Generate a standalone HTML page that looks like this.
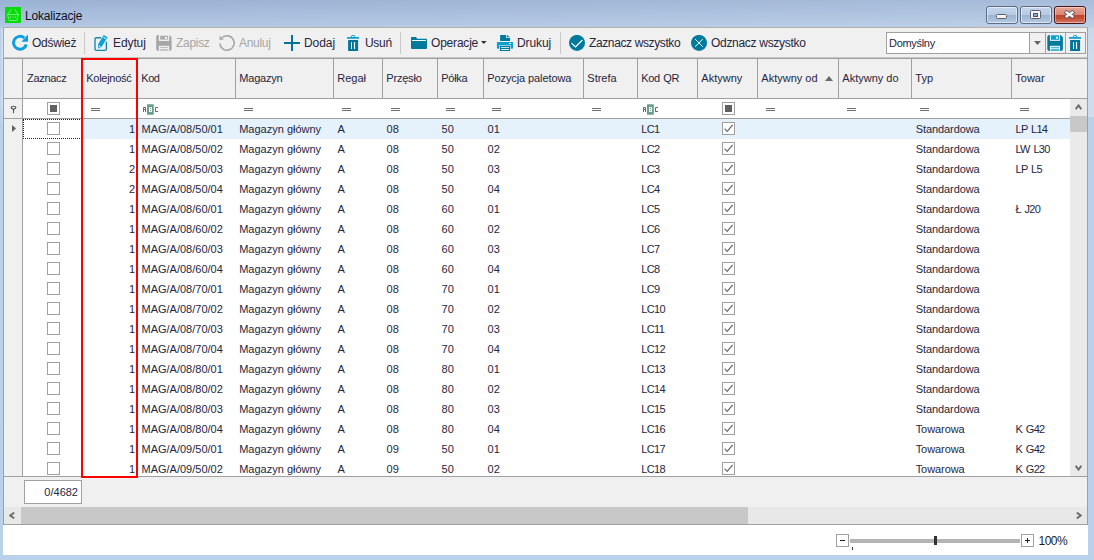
<!DOCTYPE html>
<html><head><meta charset="utf-8"><title>Lokalizacje</title>
<style>
*{box-sizing:border-box;margin:0;padding:0}
html,body{width:1094px;height:560px;overflow:hidden}
body{font-family:"Liberation Sans",sans-serif;font-size:11px;color:#262640;position:relative;background:#b9d1ea}
.abs,.abs *{position:absolute}
#frame{left:0;top:0;width:1094px;height:560px;background:linear-gradient(180deg,#9ab2d4 0,#a6bddc 14px,#b4c9e4 28px,#b9d0e9 60px,#b9d1ea 100%)}
#frame .shine{left:0;top:0;width:1094px;height:28px;background:linear-gradient(90deg,rgba(255,255,255,0) 0,rgba(255,255,255,.04) 40%,rgba(255,255,255,.14) 100%)}
#frame .lb{left:0;top:28px;width:3px;height:100px;background:linear-gradient(90deg,rgba(255,255,255,0),rgba(255,255,255,.45));-webkit-mask-image:linear-gradient(180deg,#000 75%,transparent)}
#frame .rb{left:1088px;top:28px;width:6px;height:89px;background:rgba(255,255,255,.28)}
#title{left:25px;top:9px;font-size:12px;letter-spacing:-.2px;color:#101020;white-space:nowrap;line-height:14px}
#client{left:3px;top:27px;width:1085px;height:498px;background:#f0f0f0;border-right:1px solid #a0a0a0;border-left:1px solid #a6a6a6;border-top:1px solid #b4b1ab}
.tb{font-size:12px;letter-spacing:-.3px;color:#262640;white-space:nowrap;line-height:14px;top:36px}
.tb.dis{color:#a6a6a6}
.sep{top:32px;width:1px;height:22px;background:#c9c9c9}
.vl{width:1px;background:#a0a0a0}
.hl{height:1px;background:#a0a0a0}
.hd{top:72px;line-height:13px;white-space:nowrap}
.c{line-height:13px;white-space:nowrap}
.cb{width:13px;height:13px;border:1px solid #a0a0a0;background:#fff}
.eq{width:9px;height:3px;border-top:1px solid #6e6e6e;border-bottom:1px solid #6e6e6e}
</style></head><body>
<div id="frame" class="abs"><div class="shine"></div><div class="lb"></div><div class="rb"></div></div>
<div class="abs" style="left:5px;top:7px;width:16px;height:16px;background:#05dc0a">
<svg style="left:0;top:0" width="16" height="16" viewBox="0 0 16 16"><g fill="none" stroke="#7df082" stroke-width=".9"><path d="M3.25 7 L6.25 2.25 M12.75 7 L9.75 2.25"/><path d="M2 7.5 H14"/><path d="M2.75 8 L4.25 13.5 H11.75 L13.25 8"/><path d="M5.5 9.25V11.25M7.9 9.25V11.25M10.3 9.25V11.25" stroke-width=".8"/></g></svg></div>
<div id="title" class="abs">Lokalizacje</div>
<div class="abs" style="left:986px;top:6px;width:32px;height:18px;border:1px solid #5b6b84;border-radius:3px;background:linear-gradient(180deg,#c4d6eb 0,#b6cbe4 47%,#9bb4d2 53%,#b4c9e3 100%);box-shadow:inset 0 0 0 1px rgba(255,255,255,.55)"><div style="left:9px;top:7.4px;width:11px;height:5px;background:#f4f4f4;border:1px solid #5a5f6e;border-radius:1.5px"></div></div>
<div class="abs" style="left:1020px;top:6px;width:32px;height:18px;border:1px solid #5b6b84;border-radius:3px;background:linear-gradient(180deg,#c4d6eb 0,#b6cbe4 47%,#9bb4d2 53%,#b4c9e3 100%);box-shadow:inset 0 0 0 1px rgba(255,255,255,.55)"><div style="left:9px;top:3px;width:11px;height:9.4px;background:#f4f4f4;border:1px solid #5a5f6e;border-radius:1.5px"><div style="left:2px;top:2px;width:5px;height:4px;background:#8fa6c2;border:1px solid #4f5566"></div></div></div>
<div class="abs" style="left:1054px;top:6px;width:32px;height:18px;border:1px solid #4a1418;border-radius:3px;background:linear-gradient(180deg,#e8a898 0,#dc8573 47%,#c0442a 53%,#c8523a 75%,#d67e68 100%);box-shadow:inset 0 0 0 1px rgba(255,255,255,.4)"><svg style="left:8px;top:1.6px" width="14" height="12" viewBox="0 0 14 12"><path d="M2.1 2.3 L10.9 8.4 M10.9 2.3 L2.1 8.4" stroke="#55505c" stroke-width="4" stroke-linecap="butt"/><path d="M2.7 2.7 L10.3 8 M10.3 2.7 L2.7 8" stroke="#f8f8f8" stroke-width="2.4" stroke-linecap="butt"/></svg></div>
<div id="client" class="abs"></div>
<div class="abs" id="toolbar">
<svg style="left:11px;top:34px" width="18" height="18" viewBox="0 0 18 18"><path d="M13.3 3.9 A6.5 6.5 0 1 0 15.3 10.5" fill="none" stroke="#0c9fe0" stroke-width="3"/><path d="M17 0.6 V7.7 H10.4 Z" fill="#0c9fe0"/></svg>
<div class="tb" style="left:32px;letter-spacing:-0.25px">Odśwież</div>
<div class="sep" style="left:84px"></div>
<svg style="left:93px;top:33px" width="16" height="19" viewBox="0 0 16 19"><path d="M8.2 4.75 H3.4 Q2 4.75 2 6.2 V16 Q2 17.4 3.4 17.4 H12 Q13.4 17.4 13.4 16 V8.8" fill="none" stroke="#1585a6" stroke-width="1.35"/><g transform="translate(5 15.7) rotate(31)"><path d="M0 0 L-2.2 -3.8 V-14.8 H2.2 V-3.8 Z" fill="#0aa0cf" stroke="#f0f0f0" stroke-width="1.2" paint-order="stroke"/><path d="M0 -1.4 L-1 -3.4 H1 Z" fill="#fff"/><rect x="-1.4" y="-13.2" width="2.8" height="1" fill="#e6f5fb"/></g></svg>
<div class="tb" style="left:113px;letter-spacing:-0.1px">Edytuj</div>
<svg style="left:156px;top:35px" width="16" height="16" viewBox="0 0 16 16"><path d="M1.8 0 H13.2 L15.6 2.2 V14 Q15.6 15.8 13.8 15.8 H1.8 Q0.2 15.8 0.2 14 V1.6 Q0.2 0 1.8 0Z" fill="#a6a6a6"/><rect x="2.8" y="0" width="10.4" height="6" fill="#f0f0f0"/><rect x="4.2" y="0.7" width="7.7" height="3.9" fill="#ababab"/><rect x="9" y="2" width="2" height="1.9" fill="#f4f4f4"/><rect x="2.8" y="10.8" width="10.4" height="5" fill="#f0f0f0"/><rect x="4.2" y="12.2" width="7.7" height=".8" fill="#adadad"/><rect x="4.2" y="14.3" width="7.7" height="1.2" fill="#adadad"/></svg>
<div class="tb dis" style="left:176px;letter-spacing:-0.3px">Zapisz</div>
<svg style="left:218px;top:34px" width="18" height="18" viewBox="0 0 18 18"><path d="M1.8 9.4 A7.2 7.2 0 1 0 4.3 3.5" fill="none" stroke="#a6a6a6" stroke-width="1.6"/><path d="M1.7 1.8 L1.5 6.1 L5.9 5.6 Z" fill="#a6a6a6"/></svg>
<div class="tb dis" style="left:239px;letter-spacing:-0.3px">Anuluj</div>
<svg style="left:284px;top:35px" width="16" height="16" viewBox="0 0 16 16"><path d="M8 0 V16 M0 8 H16" stroke="#007599" stroke-width="2"/></svg>
<div class="tb" style="left:304px;letter-spacing:-0.05px">Dodaj</div>
<svg style="left:346px;top:34px" width="14" height="18" viewBox="0 0 14 18"><rect x="5.6" y="1.5" width="3" height="2.2" rx=".6" fill="none" stroke="#0aa0cf" stroke-width="1"/><rect x="1" y="3" width="12" height="1.8" rx=".3" fill="#0aa0cf"/><rect x="2.1" y="6" width="10" height="10.9" rx=".5" fill="#007599"/><rect x="5" y="8" width="1" height="7" fill="#fff"/><rect x="7.9" y="8" width="1.2" height="7" fill="#fff"/></svg>
<div class="tb" style="left:365px;letter-spacing:-0.3px">Usuń</div>
<div class="sep" style="left:400px"></div>
<svg style="left:411px;top:37px" width="16" height="12" viewBox="0 0 16 12"><path d="M0 1 Q0 0 1 0 H5 L6.3 1.8 H15 Q16 1.8 16 2.8 V11 Q16 12 15 12 H1 Q0 12 0 11Z" fill="#007a9c"/><rect x="1" y="3" width="14" height="1" fill="#f2fafc"/></svg>
<div class="tb" style="left:431px;letter-spacing:-0.2px">Operacje</div>
<svg style="left:481px;top:41px" width="6" height="3" viewBox="0 0 6 3"><path d="M0 0 H5.6 L2.8 3Z" fill="#333"/></svg>
<svg style="left:496px;top:34px" width="18" height="18" viewBox="0 0 18 18"><path d="M4.1 1 H10.2 V4.1 H14.1 V6.9 H4.1Z" fill="#007a9c"/><path d="M11 1 L14.1 3.3 H11Z" fill="#007a9c"/><rect x="0.9" y="8.06" width="16.2" height="6.8" rx=".8" fill="#0aa0cf"/><rect x="13" y="9.1" width="2" height=".9" fill="#fff"/><rect x="3.2" y="11.4" width="11.6" height="6.6" fill="#f0f0f0"/><rect x="3.9" y="12" width="10.2" height="4.9" rx=".5" fill="#007a9c"/><rect x="5" y="13.2" width="8" height=".8" fill="#fff"/><rect x="5" y="15" width="8" height=".9" fill="#fff"/></svg>
<div class="tb" style="left:517px;letter-spacing:-0.1px">Drukuj</div>
<div class="sep" style="left:560px"></div>
<svg style="left:569px;top:35px" width="16" height="16" viewBox="0 0 16 16"><circle cx="8" cy="7.9" r="8" fill="#007a9c"/><path d="M2.5 8.2 L6.5 11.9 L13.4 5" fill="none" stroke="#fff" stroke-width="1.15"/></svg>
<div class="tb" style="left:589px;letter-spacing:-0.38px">Zaznacz wszystko</div>
<svg style="left:691px;top:35px" width="16" height="16" viewBox="0 0 16 16"><circle cx="8" cy="7.9" r="8" fill="#007a9c"/><path d="M4.1 4.05 L11.8 11.7 M11.8 4.05 L4.1 11.7" fill="none" stroke="#fff" stroke-width="1"/></svg>
<div class="tb" style="left:711px;letter-spacing:-0.3px">Odznacz wszystko</div>
<div style="left:886px;top:32px;width:160px;height:22px;border:1px solid #a0a0a0;background:#fff"></div>
<div style="left:1029px;top:33px;width:1px;height:20px;background:#a0a0a0"></div>
<div style="left:1030px;top:33px;width:15px;height:20px;background:#f0f0f0"></div>
<div class="c" style="left:889px;top:36.5px;letter-spacing:-.3px">Domyślny</div>
<svg style="left:1034px;top:41px" width="7" height="4" viewBox="0 0 7 4"><path d="M0 0 H7 L3.5 3.9Z" fill="#666"/></svg>
<div style="left:1045px;top:32px;width:21px;height:22px;border:1px solid #a0a0a0;background:#f0f0f0"></div>
<svg style="left:1047px;top:35px" width="16" height="16" viewBox="0 0 16 16"><path d="M2.2 0 H13.6 L15.9 2.3 V13.9 Q15.9 15.9 13.9 15.9 H2.2 Q.3 15.9 .3 13.9 V2 Q.3 0 2.2 0Z" fill="#007a9c"/><rect x="2.9" y="0" width="10.2" height="5.86" fill="#eef3f5"/><rect x="3.9" y="0.3" width="8.2" height="4.5" fill="#0aa0cf"/><rect x="9.1" y="1.8" width="1.9" height="1.9" fill="#f4fbfd"/><rect x="2.9" y="10.8" width="10.2" height="5.1" fill="#eef3f5"/><rect x="3.9" y="11.6" width="8.2" height="4.3" fill="#cdeaf6"/><rect x="3.9" y="12.07" width="8.2" height=".85" fill="#2fb0e0"/><rect x="3.9" y="14" width="8.2" height="1.9" fill="#3fb6e2"/></svg>
<div style="left:1065px;top:32px;width:21px;height:22px;border:1px solid #a0a0a0;background:#f0f0f0"></div>
<svg style="left:1068px;top:34px" width="14" height="18" viewBox="0 0 14 18"><rect x="5.6" y="1.5" width="3" height="2.2" rx=".6" fill="none" stroke="#0aa0cf" stroke-width="1"/><rect x="1" y="3" width="12" height="1.8" rx=".3" fill="#0aa0cf"/><rect x="2.1" y="6" width="10" height="10.9" rx=".5" fill="#007599"/><rect x="5" y="8" width="1" height="7" fill="#fff"/><rect x="7.9" y="8" width="1.2" height="7" fill="#fff"/></svg>
</div>
<div class="abs" id="grid">
<div style="left:4px;top:58px;width:1083px;height:419px;background:#fff"></div>
<div style="left:4px;top:58px;width:1083px;height:41px;background:#f0f0f0"></div>
<div style="left:4px;top:99px;width:18px;height:378px;background:#f0f0f0"></div>
<div style="left:82px;top:119px;width:988px;height:20px;background:#e5f1fb"></div>
<div class="hl" style="left:3px;top:57px;width:1084px;background:#c6c6c6"></div>
<div class="hl" style="left:3px;top:58px;width:1084px"></div>
<div class="hl" style="left:4px;top:98px;width:1083px"></div>
<div class="hl" style="left:4px;top:118px;width:1066px"></div>
<div class="hl" style="left:4px;top:476px;width:1083px"></div>
<div class="vl" style="left:3px;top:58px;height:467px"></div>
<div class="vl" style="left:22px;top:58px;height:419px"></div>
<div class="vl" style="left:82px;top:59px;height:39px"></div>
<div class="vl" style="left:137px;top:59px;height:39px"></div>
<div class="vl" style="left:235px;top:59px;height:39px"></div>
<div class="vl" style="left:333px;top:59px;height:39px"></div>
<div class="vl" style="left:382px;top:59px;height:39px"></div>
<div class="vl" style="left:437px;top:59px;height:39px"></div>
<div class="vl" style="left:483px;top:59px;height:39px"></div>
<div class="vl" style="left:583px;top:59px;height:39px"></div>
<div class="vl" style="left:637px;top:59px;height:39px"></div>
<div class="vl" style="left:697px;top:59px;height:39px"></div>
<div class="vl" style="left:757px;top:59px;height:39px"></div>
<div class="vl" style="left:838px;top:59px;height:39px"></div>
<div class="vl" style="left:911px;top:59px;height:39px"></div>
<div class="vl" style="left:1011px;top:59px;height:39px"></div>
<div class="hd" style="left:27px;letter-spacing:-0.32px">Zaznacz</div>
<div class="hd" style="left:86.3px;letter-spacing:-0.28px">Kolejność</div>
<div class="hd" style="left:141.3px;letter-spacing:-0.5px">Kod</div>
<div class="hd" style="left:239.3px;letter-spacing:-0.2px">Magazyn</div>
<div class="hd" style="left:337.3px;letter-spacing:0px">Regał</div>
<div class="hd" style="left:386.3px;letter-spacing:-0.2px">Przęsło</div>
<div class="hd" style="left:441.3px;letter-spacing:-0.3px">Półka</div>
<div class="hd" style="left:487.3px;letter-spacing:-0.1px">Pozycja paletowa</div>
<div class="hd" style="left:587.3px;letter-spacing:0px">Strefa</div>
<div class="hd" style="left:641.3px;letter-spacing:-0.4px;word-spacing:1px">Kod QR</div>
<div class="hd" style="left:701.3px;letter-spacing:0px">Aktywny</div>
<div class="hd" style="left:761.3px;letter-spacing:0px">Aktywny od</div>
<div class="hd" style="left:842.3px;letter-spacing:0px">Aktywny do</div>
<div class="hd" style="left:915.3px;letter-spacing:0px">Typ</div>
<div class="hd" style="left:1015.3px;letter-spacing:0px">Towar</div>
<svg style="left:825px;top:76px" width="8" height="5" viewBox="0 0 8 5"><path d="M0 5 H8 L4 0Z" fill="#6a6a6a"/></svg>
<svg style="left:10px;top:104.5px" width="7" height="9" viewBox="0 0 7 9"><path d="M1.3 2.6 L3.5 5.6 L5.7 2.6Z" fill="#555"/><ellipse cx="3.5" cy="2.6" rx="2.3" ry="1.4" fill="#f4f4f4" stroke="#555" stroke-width="1.1"/><path d="M3.5 5 V8.2" stroke="#555" stroke-width="1.1"/></svg>
<div class="cb" style="left:47px;top:102px"><div style="left:2px;top:2px;width:7px;height:7px;background:#606060"></div></div>
<div class="cb" style="left:722px;top:102px"><div style="left:2px;top:2px;width:7px;height:7px;background:#606060"></div></div>
<div class="eq" style="left:91px;top:108px"></div>
<div class="eq" style="left:244px;top:108px"></div>
<div class="eq" style="left:342px;top:108px"></div>
<div class="eq" style="left:391px;top:108px"></div>
<div class="eq" style="left:446px;top:108px"></div>
<div class="eq" style="left:492px;top:108px"></div>
<div class="eq" style="left:592px;top:108px"></div>
<div class="eq" style="left:766px;top:108px"></div>
<div class="eq" style="left:847px;top:108px"></div>
<div class="eq" style="left:920px;top:108px"></div>
<div class="eq" style="left:1020px;top:108px"></div>
<svg style="left:142px;top:104px" width="17" height="11" viewBox="0 0 17 11"><rect x="5" y="0.2" width="6.8" height="10.6" rx=".6" fill="#6a9e8c"/><path d="M1.5 8 V3.5 H3.5 V8 M1.5 5.5 H3.5 M16 3.5 H13.5 V7.5 H16" fill="none" stroke="#6a6a6a" stroke-width="1"/><rect x="7" y="3" width="3" height="5" fill="#fff"/><rect x="8" y="4" width="1" height="1" fill="#6a9e8c"/><rect x="8" y="6" width="1" height="1" fill="#6a9e8c"/></svg>
<svg style="left:642px;top:104px" width="17" height="11" viewBox="0 0 17 11"><rect x="5" y="0.2" width="6.8" height="10.6" rx=".6" fill="#6a9e8c"/><path d="M1.5 8 V3.5 H3.5 V8 M1.5 5.5 H3.5 M16 3.5 H13.5 V7.5 H16" fill="none" stroke="#6a6a6a" stroke-width="1"/><rect x="7" y="3" width="3" height="5" fill="#fff"/><rect x="8" y="4" width="1" height="1" fill="#6a9e8c"/><rect x="8" y="6" width="1" height="1" fill="#6a9e8c"/></svg>
<div class="cb" style="left:47px;top:122px"></div><div class="c" style="left:82px;width:53px;text-align:right;top:123px">1</div><div class="c" style="left:141.5px;top:123px">MAG/A/08/50/01</div><div class="c" style="left:239.2px;top:123px">Magazyn główny</div><div class="c" style="left:337.6px;top:123px">A</div><div class="c" style="left:386.6px;top:123px">08</div><div class="c" style="left:441.6px;top:123px">50</div><div class="c" style="left:487.6px;top:123px">01</div><div class="c" style="left:641.3px;top:123px;letter-spacing:-.65px">LC1</div><div class="cb" style="left:722px;top:122px"><svg style="left:1px;top:1px" width="9" height="9" viewBox="0 0 9 9"><path d="M0.6 4.6 L3.2 7.4 L8.6 1" fill="none" stroke="#6a6a6a" stroke-width="1.2"/></svg></div><div class="c" style="left:915.7px;top:123px;letter-spacing:-.08px">Standardowa</div><div class="c" style="left:1015.5px;top:123px;letter-spacing:-.7px;word-spacing:1.3px">LP L14</div>
<div class="cb" style="left:47px;top:142px"></div><div class="c" style="left:82px;width:53px;text-align:right;top:143px">1</div><div class="c" style="left:141.5px;top:143px">MAG/A/08/50/02</div><div class="c" style="left:239.2px;top:143px">Magazyn główny</div><div class="c" style="left:337.6px;top:143px">A</div><div class="c" style="left:386.6px;top:143px">08</div><div class="c" style="left:441.6px;top:143px">50</div><div class="c" style="left:487.6px;top:143px">02</div><div class="c" style="left:641.3px;top:143px;letter-spacing:-.65px">LC2</div><div class="cb" style="left:722px;top:142px"><svg style="left:1px;top:1px" width="9" height="9" viewBox="0 0 9 9"><path d="M0.6 4.6 L3.2 7.4 L8.6 1" fill="none" stroke="#6a6a6a" stroke-width="1.2"/></svg></div><div class="c" style="left:915.7px;top:143px;letter-spacing:-.08px">Standardowa</div><div class="c" style="left:1015.5px;top:143px;letter-spacing:-.7px;word-spacing:1.3px">LW L30</div>
<div class="cb" style="left:47px;top:162px"></div><div class="c" style="left:82px;width:53px;text-align:right;top:163px">2</div><div class="c" style="left:141.5px;top:163px">MAG/A/08/50/03</div><div class="c" style="left:239.2px;top:163px">Magazyn główny</div><div class="c" style="left:337.6px;top:163px">A</div><div class="c" style="left:386.6px;top:163px">08</div><div class="c" style="left:441.6px;top:163px">50</div><div class="c" style="left:487.6px;top:163px">03</div><div class="c" style="left:641.3px;top:163px;letter-spacing:-.65px">LC3</div><div class="cb" style="left:722px;top:162px"><svg style="left:1px;top:1px" width="9" height="9" viewBox="0 0 9 9"><path d="M0.6 4.6 L3.2 7.4 L8.6 1" fill="none" stroke="#6a6a6a" stroke-width="1.2"/></svg></div><div class="c" style="left:915.7px;top:163px;letter-spacing:-.08px">Standardowa</div><div class="c" style="left:1015.5px;top:163px;letter-spacing:-.7px;word-spacing:1.3px">LP L5</div>
<div class="cb" style="left:47px;top:182px"></div><div class="c" style="left:82px;width:53px;text-align:right;top:183px">2</div><div class="c" style="left:141.5px;top:183px">MAG/A/08/50/04</div><div class="c" style="left:239.2px;top:183px">Magazyn główny</div><div class="c" style="left:337.6px;top:183px">A</div><div class="c" style="left:386.6px;top:183px">08</div><div class="c" style="left:441.6px;top:183px">50</div><div class="c" style="left:487.6px;top:183px">04</div><div class="c" style="left:641.3px;top:183px;letter-spacing:-.65px">LC4</div><div class="cb" style="left:722px;top:182px"><svg style="left:1px;top:1px" width="9" height="9" viewBox="0 0 9 9"><path d="M0.6 4.6 L3.2 7.4 L8.6 1" fill="none" stroke="#6a6a6a" stroke-width="1.2"/></svg></div><div class="c" style="left:915.7px;top:183px;letter-spacing:-.08px">Standardowa</div>
<div class="cb" style="left:47px;top:202px"></div><div class="c" style="left:82px;width:53px;text-align:right;top:203px">1</div><div class="c" style="left:141.5px;top:203px">MAG/A/08/60/01</div><div class="c" style="left:239.2px;top:203px">Magazyn główny</div><div class="c" style="left:337.6px;top:203px">A</div><div class="c" style="left:386.6px;top:203px">08</div><div class="c" style="left:441.6px;top:203px">60</div><div class="c" style="left:487.6px;top:203px">01</div><div class="c" style="left:641.3px;top:203px;letter-spacing:-.65px">LC5</div><div class="cb" style="left:722px;top:202px"><svg style="left:1px;top:1px" width="9" height="9" viewBox="0 0 9 9"><path d="M0.6 4.6 L3.2 7.4 L8.6 1" fill="none" stroke="#6a6a6a" stroke-width="1.2"/></svg></div><div class="c" style="left:915.7px;top:203px;letter-spacing:-.08px">Standardowa</div><div class="c" style="left:1015.5px;top:203px;letter-spacing:-.7px;word-spacing:1.3px">Ł J20</div>
<div class="cb" style="left:47px;top:222px"></div><div class="c" style="left:82px;width:53px;text-align:right;top:223px">1</div><div class="c" style="left:141.5px;top:223px">MAG/A/08/60/02</div><div class="c" style="left:239.2px;top:223px">Magazyn główny</div><div class="c" style="left:337.6px;top:223px">A</div><div class="c" style="left:386.6px;top:223px">08</div><div class="c" style="left:441.6px;top:223px">60</div><div class="c" style="left:487.6px;top:223px">02</div><div class="c" style="left:641.3px;top:223px;letter-spacing:-.65px">LC6</div><div class="cb" style="left:722px;top:222px"><svg style="left:1px;top:1px" width="9" height="9" viewBox="0 0 9 9"><path d="M0.6 4.6 L3.2 7.4 L8.6 1" fill="none" stroke="#6a6a6a" stroke-width="1.2"/></svg></div><div class="c" style="left:915.7px;top:223px;letter-spacing:-.08px">Standardowa</div>
<div class="cb" style="left:47px;top:242px"></div><div class="c" style="left:82px;width:53px;text-align:right;top:243px">1</div><div class="c" style="left:141.5px;top:243px">MAG/A/08/60/03</div><div class="c" style="left:239.2px;top:243px">Magazyn główny</div><div class="c" style="left:337.6px;top:243px">A</div><div class="c" style="left:386.6px;top:243px">08</div><div class="c" style="left:441.6px;top:243px">60</div><div class="c" style="left:487.6px;top:243px">03</div><div class="c" style="left:641.3px;top:243px;letter-spacing:-.65px">LC7</div><div class="cb" style="left:722px;top:242px"><svg style="left:1px;top:1px" width="9" height="9" viewBox="0 0 9 9"><path d="M0.6 4.6 L3.2 7.4 L8.6 1" fill="none" stroke="#6a6a6a" stroke-width="1.2"/></svg></div><div class="c" style="left:915.7px;top:243px;letter-spacing:-.08px">Standardowa</div>
<div class="cb" style="left:47px;top:262px"></div><div class="c" style="left:82px;width:53px;text-align:right;top:263px">1</div><div class="c" style="left:141.5px;top:263px">MAG/A/08/60/04</div><div class="c" style="left:239.2px;top:263px">Magazyn główny</div><div class="c" style="left:337.6px;top:263px">A</div><div class="c" style="left:386.6px;top:263px">08</div><div class="c" style="left:441.6px;top:263px">60</div><div class="c" style="left:487.6px;top:263px">04</div><div class="c" style="left:641.3px;top:263px;letter-spacing:-.65px">LC8</div><div class="cb" style="left:722px;top:262px"><svg style="left:1px;top:1px" width="9" height="9" viewBox="0 0 9 9"><path d="M0.6 4.6 L3.2 7.4 L8.6 1" fill="none" stroke="#6a6a6a" stroke-width="1.2"/></svg></div><div class="c" style="left:915.7px;top:263px;letter-spacing:-.08px">Standardowa</div>
<div class="cb" style="left:47px;top:282px"></div><div class="c" style="left:82px;width:53px;text-align:right;top:283px">1</div><div class="c" style="left:141.5px;top:283px">MAG/A/08/70/01</div><div class="c" style="left:239.2px;top:283px">Magazyn główny</div><div class="c" style="left:337.6px;top:283px">A</div><div class="c" style="left:386.6px;top:283px">08</div><div class="c" style="left:441.6px;top:283px">70</div><div class="c" style="left:487.6px;top:283px">01</div><div class="c" style="left:641.3px;top:283px;letter-spacing:-.65px">LC9</div><div class="cb" style="left:722px;top:282px"><svg style="left:1px;top:1px" width="9" height="9" viewBox="0 0 9 9"><path d="M0.6 4.6 L3.2 7.4 L8.6 1" fill="none" stroke="#6a6a6a" stroke-width="1.2"/></svg></div><div class="c" style="left:915.7px;top:283px;letter-spacing:-.08px">Standardowa</div>
<div class="cb" style="left:47px;top:302px"></div><div class="c" style="left:82px;width:53px;text-align:right;top:303px">1</div><div class="c" style="left:141.5px;top:303px">MAG/A/08/70/02</div><div class="c" style="left:239.2px;top:303px">Magazyn główny</div><div class="c" style="left:337.6px;top:303px">A</div><div class="c" style="left:386.6px;top:303px">08</div><div class="c" style="left:441.6px;top:303px">70</div><div class="c" style="left:487.6px;top:303px">02</div><div class="c" style="left:641.3px;top:303px;letter-spacing:-.65px">LC10</div><div class="cb" style="left:722px;top:302px"><svg style="left:1px;top:1px" width="9" height="9" viewBox="0 0 9 9"><path d="M0.6 4.6 L3.2 7.4 L8.6 1" fill="none" stroke="#6a6a6a" stroke-width="1.2"/></svg></div><div class="c" style="left:915.7px;top:303px;letter-spacing:-.08px">Standardowa</div>
<div class="cb" style="left:47px;top:322px"></div><div class="c" style="left:82px;width:53px;text-align:right;top:323px">1</div><div class="c" style="left:141.5px;top:323px">MAG/A/08/70/03</div><div class="c" style="left:239.2px;top:323px">Magazyn główny</div><div class="c" style="left:337.6px;top:323px">A</div><div class="c" style="left:386.6px;top:323px">08</div><div class="c" style="left:441.6px;top:323px">70</div><div class="c" style="left:487.6px;top:323px">03</div><div class="c" style="left:641.3px;top:323px;letter-spacing:-.65px">LC11</div><div class="cb" style="left:722px;top:322px"><svg style="left:1px;top:1px" width="9" height="9" viewBox="0 0 9 9"><path d="M0.6 4.6 L3.2 7.4 L8.6 1" fill="none" stroke="#6a6a6a" stroke-width="1.2"/></svg></div><div class="c" style="left:915.7px;top:323px;letter-spacing:-.08px">Standardowa</div>
<div class="cb" style="left:47px;top:342px"></div><div class="c" style="left:82px;width:53px;text-align:right;top:343px">1</div><div class="c" style="left:141.5px;top:343px">MAG/A/08/70/04</div><div class="c" style="left:239.2px;top:343px">Magazyn główny</div><div class="c" style="left:337.6px;top:343px">A</div><div class="c" style="left:386.6px;top:343px">08</div><div class="c" style="left:441.6px;top:343px">70</div><div class="c" style="left:487.6px;top:343px">04</div><div class="c" style="left:641.3px;top:343px;letter-spacing:-.65px">LC12</div><div class="cb" style="left:722px;top:342px"><svg style="left:1px;top:1px" width="9" height="9" viewBox="0 0 9 9"><path d="M0.6 4.6 L3.2 7.4 L8.6 1" fill="none" stroke="#6a6a6a" stroke-width="1.2"/></svg></div><div class="c" style="left:915.7px;top:343px;letter-spacing:-.08px">Standardowa</div>
<div class="cb" style="left:47px;top:362px"></div><div class="c" style="left:82px;width:53px;text-align:right;top:363px">1</div><div class="c" style="left:141.5px;top:363px">MAG/A/08/80/01</div><div class="c" style="left:239.2px;top:363px">Magazyn główny</div><div class="c" style="left:337.6px;top:363px">A</div><div class="c" style="left:386.6px;top:363px">08</div><div class="c" style="left:441.6px;top:363px">80</div><div class="c" style="left:487.6px;top:363px">01</div><div class="c" style="left:641.3px;top:363px;letter-spacing:-.65px">LC13</div><div class="cb" style="left:722px;top:362px"><svg style="left:1px;top:1px" width="9" height="9" viewBox="0 0 9 9"><path d="M0.6 4.6 L3.2 7.4 L8.6 1" fill="none" stroke="#6a6a6a" stroke-width="1.2"/></svg></div><div class="c" style="left:915.7px;top:363px;letter-spacing:-.08px">Standardowa</div>
<div class="cb" style="left:47px;top:382px"></div><div class="c" style="left:82px;width:53px;text-align:right;top:383px">1</div><div class="c" style="left:141.5px;top:383px">MAG/A/08/80/02</div><div class="c" style="left:239.2px;top:383px">Magazyn główny</div><div class="c" style="left:337.6px;top:383px">A</div><div class="c" style="left:386.6px;top:383px">08</div><div class="c" style="left:441.6px;top:383px">80</div><div class="c" style="left:487.6px;top:383px">02</div><div class="c" style="left:641.3px;top:383px;letter-spacing:-.65px">LC14</div><div class="cb" style="left:722px;top:382px"><svg style="left:1px;top:1px" width="9" height="9" viewBox="0 0 9 9"><path d="M0.6 4.6 L3.2 7.4 L8.6 1" fill="none" stroke="#6a6a6a" stroke-width="1.2"/></svg></div><div class="c" style="left:915.7px;top:383px;letter-spacing:-.08px">Standardowa</div>
<div class="cb" style="left:47px;top:402px"></div><div class="c" style="left:82px;width:53px;text-align:right;top:403px">1</div><div class="c" style="left:141.5px;top:403px">MAG/A/08/80/03</div><div class="c" style="left:239.2px;top:403px">Magazyn główny</div><div class="c" style="left:337.6px;top:403px">A</div><div class="c" style="left:386.6px;top:403px">08</div><div class="c" style="left:441.6px;top:403px">80</div><div class="c" style="left:487.6px;top:403px">03</div><div class="c" style="left:641.3px;top:403px;letter-spacing:-.65px">LC15</div><div class="cb" style="left:722px;top:402px"><svg style="left:1px;top:1px" width="9" height="9" viewBox="0 0 9 9"><path d="M0.6 4.6 L3.2 7.4 L8.6 1" fill="none" stroke="#6a6a6a" stroke-width="1.2"/></svg></div><div class="c" style="left:915.7px;top:403px;letter-spacing:-.08px">Standardowa</div>
<div class="cb" style="left:47px;top:422px"></div><div class="c" style="left:82px;width:53px;text-align:right;top:423px">1</div><div class="c" style="left:141.5px;top:423px">MAG/A/08/80/04</div><div class="c" style="left:239.2px;top:423px">Magazyn główny</div><div class="c" style="left:337.6px;top:423px">A</div><div class="c" style="left:386.6px;top:423px">08</div><div class="c" style="left:441.6px;top:423px">80</div><div class="c" style="left:487.6px;top:423px">04</div><div class="c" style="left:641.3px;top:423px;letter-spacing:-.65px">LC16</div><div class="cb" style="left:722px;top:422px"><svg style="left:1px;top:1px" width="9" height="9" viewBox="0 0 9 9"><path d="M0.6 4.6 L3.2 7.4 L8.6 1" fill="none" stroke="#6a6a6a" stroke-width="1.2"/></svg></div><div class="c" style="left:915.7px;top:423px;letter-spacing:-.08px">Towarowa</div><div class="c" style="left:1015.5px;top:423px;letter-spacing:-.7px;word-spacing:1.3px">K G42</div>
<div class="cb" style="left:47px;top:442px"></div><div class="c" style="left:82px;width:53px;text-align:right;top:443px">1</div><div class="c" style="left:141.5px;top:443px">MAG/A/09/50/01</div><div class="c" style="left:239.2px;top:443px">Magazyn główny</div><div class="c" style="left:337.6px;top:443px">A</div><div class="c" style="left:386.6px;top:443px">09</div><div class="c" style="left:441.6px;top:443px">50</div><div class="c" style="left:487.6px;top:443px">01</div><div class="c" style="left:641.3px;top:443px;letter-spacing:-.65px">LC17</div><div class="cb" style="left:722px;top:442px"><svg style="left:1px;top:1px" width="9" height="9" viewBox="0 0 9 9"><path d="M0.6 4.6 L3.2 7.4 L8.6 1" fill="none" stroke="#6a6a6a" stroke-width="1.2"/></svg></div><div class="c" style="left:915.7px;top:443px;letter-spacing:-.08px">Towarowa</div><div class="c" style="left:1015.5px;top:443px;letter-spacing:-.7px;word-spacing:1.3px">K G42</div>
<div class="cb" style="left:47px;top:462px"></div><div class="c" style="left:82px;width:53px;text-align:right;top:463px">1</div><div class="c" style="left:141.5px;top:463px">MAG/A/09/50/02</div><div class="c" style="left:239.2px;top:463px">Magazyn główny</div><div class="c" style="left:337.6px;top:463px">A</div><div class="c" style="left:386.6px;top:463px">09</div><div class="c" style="left:441.6px;top:463px">50</div><div class="c" style="left:487.6px;top:463px">02</div><div class="c" style="left:641.3px;top:463px;letter-spacing:-.65px">LC18</div><div class="cb" style="left:722px;top:462px"><svg style="left:1px;top:1px" width="9" height="9" viewBox="0 0 9 9"><path d="M0.6 4.6 L3.2 7.4 L8.6 1" fill="none" stroke="#6a6a6a" stroke-width="1.2"/></svg></div><div class="c" style="left:915.7px;top:463px;letter-spacing:-.08px">Towarowa</div><div class="c" style="left:1015.5px;top:463px;letter-spacing:-.7px;word-spacing:1.3px">K G22</div>
<div style="left:4px;top:477px;width:1083px;height:30px;background:#f0f0f0"></div>
<div class="hl" style="left:4px;top:476px;width:1083px"></div>
<svg style="left:12px;top:125px" width="4" height="7" viewBox="0 0 4 7"><path d="M0 0 L4 3.5 L0 7Z" fill="#606060"/></svg>
<div style="left:23px;top:119px;width:59px;height:20px;background:#fff;border:1px dotted #222"></div>
<div class="cb" style="left:47px;top:122px"></div>
<div style="left:1070px;top:99px;width:17px;height:377px;background:#eaeaea"></div>
<div style="left:1070px;top:116px;width:17px;height:16px;background:#c8c8c8"></div>
<svg style="left:1075px;top:104px" width="7" height="6" viewBox="0 0 7 6"><path d="M0.7 5.2 L3.5 1.4 L6.3 5.2" fill="none" stroke="#6a6a6a" stroke-width="1.9"/></svg>
<svg style="left:1075px;top:465px" width="7" height="6" viewBox="0 0 7 6"><path d="M0.7 0.8 L3.5 4.6 L6.3 0.8" fill="none" stroke="#6a6a6a" stroke-width="1.9"/></svg>
<div style="left:81px;top:58px;width:57px;height:420px;border:2px solid #f00"></div>
<div style="left:24px;top:480px;width:58px;height:24px;border:1px solid #a0a0a0;background:#fff"></div>
<div class="c" style="left:24px;width:54px;text-align:right;top:486px">0/4682</div>
<div style="left:4px;top:507px;width:1083px;height:18px;background:#e8e8e8"></div>
<div style="left:21px;top:507px;width:727px;height:17px;background:#c8c8c8"></div>
<svg style="left:9px;top:512px" width="6" height="7" viewBox="0 0 6 7"><path d="M5.2 0.6 L1.4 3.5 L5.2 6.4" fill="none" stroke="#6a6a6a" stroke-width="1.9"/></svg>
<svg style="left:1076px;top:512px" width="6" height="7" viewBox="0 0 6 7"><path d="M0.8 0.6 L4.6 3.5 L0.8 6.4" fill="none" stroke="#6a6a6a" stroke-width="1.9"/></svg>
<div class="hl" style="left:4px;top:524px;width:1083px"></div>
<div style="left:3px;top:525px;width:1085px;height:30px;background:#fff"></div>
<div style="left:836px;top:534px;width:13px;height:13px;border:1px solid #a0a0a0;background:#fff"><div style="left:3px;top:5px;width:5px;height:1px;background:#222"></div></div>
<div style="left:850px;top:539px;width:170px;height:4px;background:#b4b4b4"></div>
<div style="left:934px;top:536px;width:3px;height:9px;background:#333"></div>
<div style="left:852px;top:547px;width:1px;height:3px;background:#333"></div>
<div style="left:1021px;top:534px;width:13px;height:13px;border:1px solid #a0a0a0;background:#fff"><div style="left:3px;top:5px;width:5px;height:1px;background:#222"></div><div style="left:5px;top:3px;width:1px;height:5px;background:#222"></div></div>
<div class="c" style="left:1038.5px;top:535px;font-size:12px;letter-spacing:-.5px;color:#1c1c1c">100%</div>
</div>
</body></html>
